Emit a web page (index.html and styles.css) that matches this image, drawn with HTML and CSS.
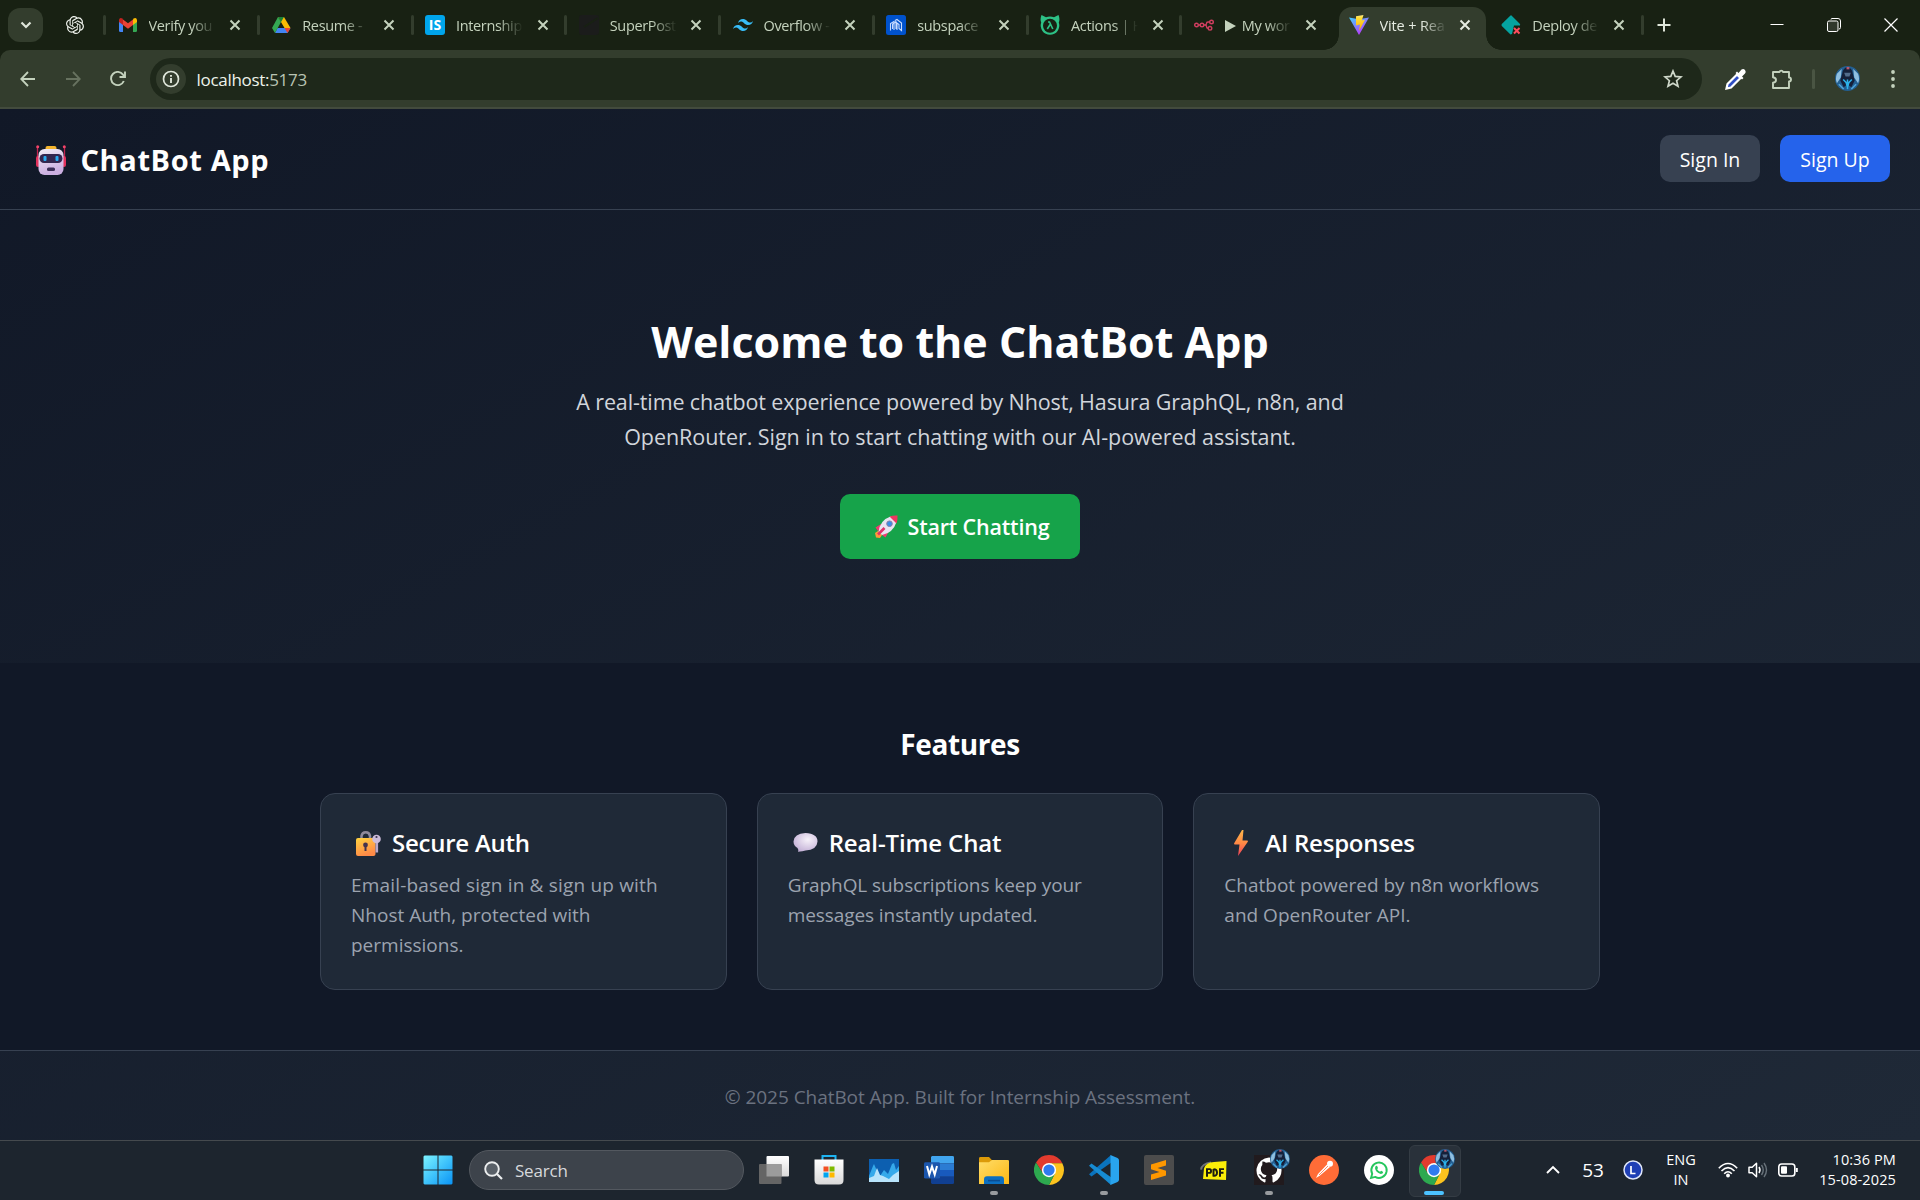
FILE: index.html
```html
<!DOCTYPE html>
<html lang="en">
<head>
<meta charset="utf-8">
<title>Vite + React</title>
<link rel="stylesheet" href="styles.css">
</head>
<body>
<svg class="defs" width="0" height="0" aria-hidden="true">
  <defs>
    <linearGradient id="win" x1="0" y1="0" x2="1" y2="1"><stop offset="0" stop-color="#7df3ff"/><stop offset=".5" stop-color="#40c4fb"/><stop offset="1" stop-color="#0a93f5"/></linearGradient>
    <linearGradient id="vite" x1="0" y1="0" x2=".6" y2="1"><stop offset="0" stop-color="#41d1ff"/><stop offset="1" stop-color="#bd34fe"/></linearGradient>
    <linearGradient id="flash" x1="0" y1="0" x2="0" y2="1"><stop offset="0" stop-color="#ffea83"/><stop offset=".2" stop-color="#ffdd35"/><stop offset="1" stop-color="#ffa800"/></linearGradient>
    <linearGradient id="bolt" x1="0" y1="0" x2="0" y2="1"><stop offset="0" stop-color="#fdb64a"/><stop offset=".5" stop-color="#ff8a45"/><stop offset="1" stop-color="#f0405a"/></linearGradient>
    <linearGradient id="lock" x1="0" y1="0" x2=".4" y2="1"><stop offset="0" stop-color="#ffd33f"/><stop offset="1" stop-color="#ff8a48"/></linearGradient>
    <linearGradient id="face" x1="0" y1="0" x2=".3" y2="1"><stop offset="0" stop-color="#f2ecf6"/><stop offset="1" stop-color="#cbaee0"/></linearGradient>
    <radialGradient id="bubble" cx=".6" cy=".35" r=".7"><stop offset="0" stop-color="#f7f2fa"/><stop offset="1" stop-color="#c3b0d6"/></radialGradient>
    <linearGradient id="folder" x1="0" y1="0" x2="1" y2="1"><stop offset="0" stop-color="#ffdd69"/><stop offset="1" stop-color="#fcb813"/></linearGradient>
    <linearGradient id="paper" x1="0" y1="0" x2="0" y2="1"><stop offset="0" stop-color="#ffffff"/><stop offset="1" stop-color="#d9d9d9"/></linearGradient>
    <symbol id="chrome" viewBox="0 0 48 48">
      <path fill="#e33b2e" d="M24 13H45.3A24 24 0 0 0 3.2 12L14.5 29.5Z"/>
      <path fill="#fcc31e" d="M33.5 29.5 24 48A24 24 0 0 0 45.3 13H24Z"/>
      <path fill="#2da94f" d="M14.5 29.5 3.2 12A24 24 0 0 0 24 48L33.5 29.5Z"/>
      <circle cx="24" cy="24" r="11.4" fill="#fff"/><circle cx="24" cy="24" r="9" fill="#2f7bf0"/>
    </symbol>
    <symbol id="avatar" viewBox="0 0 26 26">
      <circle cx="13" cy="13" r="13" fill="#235f92"/>
      <path fill="#8fbfe0" d="M2 8 7 3 6 12 2 18Q0 13 2 8ZM24 8 19 3 20 12 24 18Q26 13 24 8Z"/>
      <path fill="#15203a" d="M13 1Q8 2 7.500 8L5.500 15 9 22 13 19 17 22 20.500 15 18.500 8Q18 2 13 1Z"/>
      <path fill="#b9586c" d="M12 1H15V3.500H12Z"/><path fill="#526c8c" d="M9.500 7H16.500L15 11H11Z"/>
      <path fill="none" stroke="#2bb2ea" stroke-width="1.600" d="M8.500 14 11.500 17 13 22 14.500 17 17.500 14M13 14V24"/>
      <path fill="none" stroke="#4fa6da" stroke-width="1.600" d="M4 19 9 24M22 19 17 24"/>
    </symbol>
    <symbol id="x" viewBox="0 0 12 12"><path d="M1.500 1.500 10.500 10.500M10.500 1.500 1.500 10.500" fill="none" stroke="currentColor" stroke-width="2"/></symbol>
  </defs>
</svg>

<div class="tabstrip">
  <div class="tab-search"><svg width="12" height="8" viewBox="0 0 12 8"><path d="M1.500 1.500 6 6 10.500 1.500" fill="none" stroke="#dfe6da" stroke-width="2.200"/></svg></div>
  <div class="tab-pinned"><svg width="18" height="18" viewBox="0 0 24 24"><path fill="#eef2ec" d="M22.2819 9.8211a5.9847 5.9847 0 0 0-.5157-4.9108 6.0462 6.0462 0 0 0-6.5098-2.9A6.0651 6.0651 0 0 0 4.9807 4.1818a5.9847 5.9847 0 0 0-3.9977 2.9 6.0462 6.0462 0 0 0 .7427 7.0966 5.98 5.98 0 0 0 .511 4.9107 6.051 6.051 0 0 0 6.5146 2.9001A5.9847 5.9847 0 0 0 13.2599 24a6.0557 6.0557 0 0 0 5.7718-4.2058 5.9894 5.9894 0 0 0 3.9977-2.9001 6.0557 6.0557 0 0 0-.7475-7.0729zm-9.022 12.6081a4.4755 4.4755 0 0 1-2.8764-1.0408l.1419-.0804 4.7783-2.7582a.7948.7948 0 0 0 .3927-.6813v-6.7369l2.02 1.1686a.071.071 0 0 1 .038.052v5.5826a4.504 4.504 0 0 1-4.4945 4.4944zm-9.6607-4.1254a4.4708 4.4708 0 0 1-.5346-3.0137l.142.0852 4.783 2.7582a.7712.7712 0 0 0 .7806 0l5.8428-3.3685v2.3324a.0804.0804 0 0 1-.0332.0615L9.74 19.9502a4.4992 4.4992 0 0 1-6.1408-1.6464zM2.3408 7.8956a4.485 4.485 0 0 1 2.3655-1.9728V11.6a.7664.7664 0 0 0 .3879.6765l5.8144 3.3543-2.0201 1.1685a.0757.0757 0 0 1-.071 0l-4.8303-2.7865A4.504 4.504 0 0 1 2.3408 7.872zm16.5963 3.8558L13.1038 8.364 15.1192 7.2a.0757.0757 0 0 1 .071 0l4.8303 2.7913a4.4944 4.4944 0 0 1-.6765 8.1042v-5.6772a.79.79 0 0 0-.407-.667zm2.0107-3.0231l-.142-.0852-4.7735-2.7818a.7759.7759 0 0 0-.7854 0L9.409 9.2297V6.8974a.0662.0662 0 0 1 .0284-.0615l4.8303-2.7866a4.4992 4.4992 0 0 1 6.6802 4.66zM8.3065 12.863l-2.02-1.1638a.0804.0804 0 0 1-.038-.0567V6.0742a4.4992 4.4992 0 0 1 7.3757-3.4537l-.142.0805L8.704 5.459a.7948.7948 0 0 0-.3927.6813zm1.0976-2.3654l2.602-1.4998 2.6069 1.4998v2.9994l-2.5974 1.4997-2.6067-1.4997Z"/></svg></div>

  <div class="tab"><svg class="fav" viewBox="0 0 20 20"><path fill="#4285f4" d="M1 6V15.500Q1 17 2.300 17H5V9Z"/><path fill="#34a853" d="M15 9V17H17.700Q19 17 19 15.500V6Z"/><path fill="#fbbc04" d="M15 4.500V10L19 7V5Q18.500 2 15.500 3.500Z"/><path fill="#ea4335" d="M5 4.500 10 8.300 15 4.500V10L10 13.800 5 10Z"/><path fill="#c5221f" d="M1 5Q1.500 2 4.500 3.500L5 4.200V10L1 7Z"/></svg><span class="t">Verify you</span><svg class="x"><use href="#x"/></svg></div>
  <div class="tab"><svg class="fav" viewBox="0 0 20 20"><path fill="#fbbc04" d="M7 2H13L19.500 13H13.500Z"/><path fill="#4285f4" d="M6.500 13H19.500L16.500 18H4Z"/><path fill="#ea4335" d="M13.500 13H19.500L16.500 18Z"/><path fill="#34a853" d="M7 2 10 7 4 18 1 13Z"/><path fill="#188038" d="M7 2H13L10 7Z"/></svg><span class="t">Resume -</span><svg class="x"><use href="#x"/></svg></div>
  <div class="tab"><span class="fav fav-is">IS</span><span class="t">Internship</span><svg class="x"><use href="#x"/></svg></div>
  <div class="tab"><svg class="fav" viewBox="0 0 20 20"><rect width="20" height="20" rx="3" fill="#1b1c1b"/><path d="M5 12 19 3" stroke="#182113" stroke-width="2"/></svg><span class="t">SuperPost</span><svg class="x"><use href="#x"/></svg></div>
  <div class="tab"><svg class="fav" viewBox="0 0 24 24"><path fill="#38bdf8" d="M12 4.800Q7.200 4.800 6 9.600 7.800 7.200 10.200 7.800C11.600 8.100 12.500 9.100 13.600 10.200 15.300 12 17.300 12 18 12Q22.800 12 24 7.200 22.200 9.600 19.800 9C18.400 8.700 17.500 7.700 16.400 6.600 14.700 4.800 12.700 4.800 12 4.800ZM6 12Q1.200 12 0 16.800 1.800 14.400 4.200 15C5.600 15.300 6.500 16.300 7.600 17.400 9.300 19.200 11.300 19.200 12 19.200Q16.800 19.200 18 14.400 16.200 16.800 13.800 16.200C12.400 15.900 11.500 14.900 10.400 13.800 8.700 12 6.700 12 6 12Z"/></svg><span class="t">Overflow -</span><svg class="x"><use href="#x"/></svg></div>
  <div class="tab"><svg class="fav" viewBox="0 0 20 20"><rect width="20" height="20" rx="2.500" fill="#0052cd"/><path d="M4.500 15.500V8.500L8 6.500V15M6.500 14V9L10 7V14M9 5.500 11 4.500 15.500 8V15.500L13 13.500V9.500L9 6.500M11 8V15" fill="none" stroke="#c8dcff" stroke-width="1.100"/></svg><span class="t">subspace</span><svg class="x"><use href="#x"/></svg></div>
  <div class="tab"><svg class="fav" viewBox="0 0 20 20"><path fill="#2dc186" d="M1.500 0 6 2.200Q10 .8 14 2.200L18.500 0Q20.200 4 18.800 7.500A9.300 9.300 0 1 1 1.200 7.500Q-.2 4 1.500 0Z"/><circle cx="10" cy="10.700" r="7" fill="#182113"/><path fill="none" stroke="#2dc186" stroke-width="1.600" d="M8 7H9.500L12.800 14M10.200 9.500 7.300 14"/></svg><span class="t">Actions | H</span><svg class="x"><use href="#x"/></svg></div>
  <div class="tab"><svg class="fav" viewBox="0 0 20 20"><g fill="none" stroke="#d13e60" stroke-width="1.400"><circle cx="2.500" cy="10" r="1.800"/><circle cx="8" cy="10" r="1.800"/><circle cx="17.500" cy="7" r="1.800"/><circle cx="16" cy="13.300" r="1.800"/><path d="M4.300 10H6.200M9.800 10H11Q12.500 10 12.500 8.500 12.500 7 14 7H15.700M11 10Q12.500 10 12.500 11.500 12.500 13.300 14.200 13.300"/></g></svg><span class="t"><svg class="play" width="11" height="12" viewBox="0 0 11 12"><path fill="currentColor" d="M0 0 11 6 0 12Z"/></svg>My wor</span><svg class="x"><use href="#x"/></svg></div>
  <div class="tab active"><svg class="fav" viewBox="0 0 20 20"><path fill="url(#vite)" d="M0 2.500 10 4.200 20 2.500 10 20Z"/><path fill="url(#flash)" d="M7 1.200 14.500 0 12.800 5.500 16 4.800 10 16 11 9.500 7 10.500Z"/></svg><span class="t">Vite + Rea</span><svg class="x"><use href="#x"/></svg></div>
  <div class="tab"><svg class="fav" viewBox="0 0 20 20"><path fill="#05a3a0" d="M9.500 .5Q10 .2 10.500.5L19 9Q19.300 9.700 19 10.500H13L11 19 9.500 19.500.8 11Q.2 10 .8 9Z"/><path d="M13 13 18.500 18.500M18.500 13 13 18.500" stroke="#ff4c5e" stroke-width="2"/></svg><span class="t">Deploy de</span><svg class="x"><use href="#x"/></svg></div>
  <div class="newtab"><svg width="14" height="14" viewBox="0 0 14 14"><path d="M7 .5V13.500M.5 7H13.500" stroke="#dfe6da" stroke-width="2"/></svg></div>
  <div class="winctl">
    <svg width="14" height="14" viewBox="0 0 14 14"><path d="M.5 6.500H13.500" stroke="#fff"/></svg>
    <svg width="14" height="14" viewBox="0 0 14 14"><path d="M4 1.500Q4 .5 5 .5H11Q13.500.5 13.500 3V9.500Q13.500 11 12 11" fill="none" stroke="#fff"/><rect x=".5" y="3" width="10.500" height="10.500" rx="1.500" fill="#30382c" stroke="#fff"/></svg>
    <svg width="14" height="14" viewBox="0 0 14 14"><path d="M.5.5 13.500 13.500M13.500.5.5 13.500" stroke="#fff" stroke-width="1.200"/></svg>
  </div>
</div>

<div class="toolbar">
  <div class="nav">
    <svg width="16" height="16" viewBox="0 0 16 16"><path d="M15 8H1.500M8 1 1.200 8 8 15" fill="none" stroke="#c4d2bd" stroke-width="1.800"/></svg>
    <svg width="16" height="16" viewBox="0 0 16 16"><path d="M1 8H14.500M8 1 14.800 8 8 15" fill="none" stroke="#67725f" stroke-width="1.800"/></svg>
    <svg width="16" height="16" viewBox="0 0 16 16"><path d="M13.800 10A6.600 6.600 0 1 1 13 3.600L14.500 5.500M15 .5V6H9.500" fill="none" stroke="#c4d2bd" stroke-width="1.900"/></svg>
  </div>
  <div class="omnibox">
    <div class="info"><svg width="18" height="18" viewBox="0 0 18 18"><circle cx="9" cy="9" r="7.500" fill="none" stroke="#dfe6da" stroke-width="1.700"/><path d="M9 8V13M9 5V6.700" stroke="#dfe6da" stroke-width="1.900"/></svg></div>
    <span class="url">localhost:<span class="port">5173</span></span>
    <svg class="star" width="20" height="20" viewBox="0 0 20 20"><path d="M10 2 12.200 7.400 18 7.900 13.600 11.700 15 17.300 10 14.300 5 17.300 6.400 11.700 2 7.900 7.800 7.400Z" fill="none" stroke="#cfd8ca" stroke-width="1.700"/></svg>
  </div>
  <svg class="pick" width="22" height="22" viewBox="0 0 22 22"><path d="M1.500 20.500 2.500 16 12 6.500 15.500 10 6 19.500Z" fill="#2f4ec4" stroke="#fff" stroke-width="2.200"/><path d="M10.500 5 12 3.500 13.500 5 16.500 1.500Q18.500.5 20 2 21.500 4 20 5.500L17 8.500 18.500 10 17 11.500Z" fill="#fff"/></svg>
  <svg class="ext" width="22" height="22" viewBox="0 0 22 22"><path d="M2 4H8.500A1.800 1.800 0 0 1 12 4H18V9.500A1.800 1.800 0 0 1 18 13.500V20H2V14.800Q5 14.300 5 12 5 9.700 2 9.200Z" fill="none" stroke="#c4d2bd" stroke-width="1.900" stroke-linejoin="round"/></svg>
  <span class="bar"></span>
  <svg class="me" width="25" height="25"><use href="#avatar"/></svg>
  <svg class="dots" width="4" height="18" viewBox="0 0 4 18"><g fill="#c4d2bd"><circle cx="2" cy="2" r="1.900"/><circle cx="2" cy="9" r="1.900"/><circle cx="2" cy="16" r="1.900"/></g></svg>
</div>

<div class="app">
  <header class="site-header">
    <div class="brand"><svg width="30" height="30" viewBox="0 0 30 30"><path d="M1.500 2V12M28.500 2V12" stroke="#c22350" stroke-width="1.300"/><circle cx="1.700" cy="1.800" r="1.500" fill="#f3456a"/><circle cx="28.300" cy="1.800" r="1.500" fill="#f3456a"/><rect x="0" y="11" width="4" height="11" rx="2" fill="#e3315c"/><rect x="26" y="11" width="4" height="11" rx="2" fill="#e3315c"/><rect x="9.500" y="1" width="11" height="5" rx="2" fill="#f5b52e"/><rect x="2.500" y="4" width="25" height="26" rx="6" fill="url(#face)"/><rect x="3.500" y="9" width="23" height="9" rx="4.500" fill="#33264f"/><rect x="7.500" y="11" width="3" height="5" rx="1" fill="#29a9ee"/><rect x="19.500" y="11" width="3" height="5" rx="1" fill="#29a9ee"/><rect x="11" y="22.500" width="8" height="3.500" rx="1.500" fill="#3c2e58"/></svg><span class="brand-name">ChatBot App</span></div>
    <nav class="auth"><button class="btn gray">Sign In</button><button class="btn blue">Sign Up</button></nav>
  </header>
  <main class="hero">
    <h1>Welcome to the ChatBot App</h1>
    <p>A real-time chatbot experience powered by Nhost, Hasura GraphQL, n8n, and<br><span class="lead-end">OpenRouter. Sign in to start chatting with our AI-powered assistant.</span></p>
    <button class="cta"><svg width="24" height="24" viewBox="0 0 24 24"><path fill="#ff9838" d="M2 22.500 1 18 4 16 8 20 6 23Z"/><path fill="#f03b72" d="M7 9 1.500 12.500 4 16 8 14ZM15 16 11.500 22.500 8 20 10 16Z"/><path fill="#e9e3f1" d="M4.500 17Q6 5 16.500 1.500L22.500 7Q19 18 8 20Z"/><path fill="#ef3561" d="M15.500 1.500Q19 .2 23.500.5 23.800 5 22.500 8.500Z"/><circle cx="15.500" cy="8.700" r="2.800" fill="#3a8de6" stroke="#8a7fa8"/><path d="M4 19.500 10.500 13" stroke="#e0306a" stroke-width="2.600"/></svg><span>Start Chatting</span></button>
  </main>
  <section class="features">
    <h2>Features</h2>
    <div class="cards">
      <article class="card"><h3><svg width="25" height="26" viewBox="0 0 25 26"><path d="M5.500 10V6A4.300 4.300 0 0 1 14 6V10" fill="none" stroke="#8d899b" stroke-width="2.500"/><rect x="0" y="8" width="19.500" height="18" rx="2" fill="url(#lock)"/><path d="M20.800 8V22.500" stroke="#b9a9ca" stroke-width="2.600"/><circle cx="20.500" cy="9" r="4.300" fill="#cbbbd8"/><circle cx="20.500" cy="7" r="1.100" fill="#3b3550"/><circle cx="9.500" cy="15" r="2.400" fill="#45324d"/><path d="M9.500 15V21" stroke="#45324d" stroke-width="2"/></svg><span>Secure Auth</span></h3><p><span class="wide">Email-based sign in &amp; sign up with</span><br>Nhost Auth, protected with<br>permissions.</p></article>
      <article class="card"><h3><svg width="25" height="26" viewBox="0 0 25 26"><path fill="url(#bubble)" d="M12.500 3Q24.500 3.500 24.500 11.500 24 20 12.500 20.500 10 21.500 5 21.700 6 20 4.500 18 .5 15.500.5 11.500 1 3.500 12.500 3Z"/></svg><span class="chat-title">Real-Time Chat</span></h3><p class="tight">GraphQL subscriptions keep your<br>messages instantly updated.</p></article>
      <article class="card"><h3><svg width="25" height="26" viewBox="0 0 25 26"><path fill="url(#bolt)" d="M13 0 5 13.500 5.500 14.500H10.500L9 26 19 11.500 18.500 10.500H13.500L14.500 0Z"/></svg><span>AI Responses</span></h3><p>Chatbot powered by n8n workflows<br>and OpenRouter API.</p></article>
    </div>
  </section>
  <footer>© 2025 ChatBot App. Built for Internship Assessment.</footer>
</div>

<div class="taskbar">
  <div class="cell start"><svg width="30" height="30" viewBox="0 0 30 30"><path fill="url(#win)" d="M1.500.5H14.500V14.500H.5V1.500ZM15.500.5H28.500L29.500 1.500V14.500H15.500ZM.5 15.500H14.500V29.500H1.500L.5 28.500ZM15.500 15.500H29.500V28.500L28.500 29.500H15.500Z"/></svg></div>
  <div class="search"><svg width="19" height="19" viewBox="0 0 19 19"><circle cx="8" cy="8" r="6.800" fill="#596068" stroke="#eceeef" stroke-width="1.900"/><path d="M13 13 18 18" stroke="#eceeef" stroke-width="2.200"/></svg><span>Search</span></div>
  <div class="cell"><svg width="30" height="28" viewBox="0 0 30 28"><rect x="7.500" y="0" width="22.500" height="20.500" rx="1" fill="url(#paper)"/><rect x="0" y="8" width="22.500" height="20" rx="1" fill="#656565"/><rect x="7.500" y="8" width="15" height="12.500" fill="#9b9b9b"/></svg></div>
  <div class="cell"><svg width="30" height="30" viewBox="0 0 30 30"><path d="M8.500 6V1H21.500V6" fill="none" stroke="#1eb4f2" stroke-width="2"/><path d="M.5 4.500H29.500V25Q29.500 29.500 25 29.500H5Q.5 29.500.5 25Z" fill="url(#paper)"/><path fill="#f25022" d="M9.500 11.500H14.500V16.500H9.500Z"/><path fill="#7fba00" d="M15.500 11.500H20.500V16.500H15.500Z"/><path fill="#00a4ef" d="M9.500 17.500H14.500V22.500H9.500Z"/><path fill="#ffb900" d="M15.500 17.500H20.500V22.500H15.500Z"/></svg></div>
  <div class="cell"><svg width="30" height="23" viewBox="0 0 30 23"><rect width="30" height="23" fill="#0c5fb0"/><path fill="#35a9ea" d="M0 17 4 7 5 5 8 12 11 17 15 11 19 15 23 5 25 4 27 11 30 7V23H0Z"/><path fill="#b8e4fb" d="M0 19 5 17 8 9 11 16 14 17 20 20 24 16 30 12V23H0Z"/></svg></div>
  <div class="cell"><svg width="30" height="28" viewBox="0 0 30 31" preserveAspectRatio="none"><path fill="#41a5ee" d="M8 0H28.500Q30 0 30 1.500V8H7V1Z"/><path fill="#2b7cd3" d="M7 8H30V15.500H7Z"/><path fill="#185abd" d="M7 15.500H30V23H7Z"/><path fill="#103f91" d="M7 23H30V29.500Q30 31 28.500 31H8L7 30Z"/><rect y="7" width="16" height="18" rx="1.500" fill="#1b56ad"/><path d="M3 11 5.300 20.500 8 11.500 10.700 20.500 13 11" fill="none" stroke="#fff" stroke-width="2"/></svg></div>
  <div class="cell run"><svg width="30" height="27" viewBox="0 0 30 28" preserveAspectRatio="none"><path fill="#dc9a08" d="M0 1.500Q0 0 1.500 0H10L13.500 4H30V10H0Z"/><path fill="url(#folder)" d="M0 5.500H10L13 3H28.500Q30 3 30 4.500V28H0Z"/><path fill="#0c6fc0" d="M5 28V23Q5 20 8 20H22Q25 20 25 23V28Z"/><path stroke="#0a4d92" stroke-width="1.600" d="M9 24.500H21"/></svg></div>
  <div class="cell"><svg width="30" height="30"><use href="#chrome"/></svg></div>
  <div class="cell run"><svg width="30" height="30" viewBox="0 0 30 31" preserveAspectRatio="none"><path fill="#0a73bd" d="M0 20 2.500 22.300 22 8V0Z"/><path fill="#168bd2" d="M0 11 2.500 8.800 22 23V31Z"/><path fill="#29a4ee" d="M21.500 0 28.500 3Q30 4 30 5.500V25.500Q30 27 28.500 28L21.500 31Z"/></svg></div>
  <div class="cell"><svg width="30" height="30" viewBox="0 0 30 30"><rect width="30" height="30" rx="2" fill="#4c4c4c"/><path fill="#ff9800" d="M7 9.500 22 5V10.500L13.500 13 22 15.700V20.500L7 25V19.500L15.500 17 7 14.300Z"/></svg></div>
  <div class="cell"><svg width="27" height="19" viewBox="0 0 27 20" preserveAspectRatio="none"><path d="M1 9Q2 3 11 1.500" fill="none" stroke="#6f7377" stroke-width="2"/><path fill="#fbee08" d="M3 19 4 8Q6 1 14 1L26.500 0 26 20Z"/><path d="M7 16.500V8.500H9.800Q11 8.500 11 10.500 11 12.500 9.500 12.500H7.500M13.500 8.500V15.500Q17 16 17 12 17 8.500 13.500 8.500M20 16.500V8.500H24M20 12.300H23.500" fill="none" stroke="#1c1c10" stroke-width="2"/></svg></div>
  <div class="cell run"><svg width="30" height="30" viewBox="0 0 30 30"><rect width="30" height="30" fill="#211a1d"/><path fill="#fff" d="M15 2.500A13 13 0 0 0 10.500 27.500Q11.500 27.500 11.500 26.500V24Q7.500 24.800 6.500 21.500L4.500 19.500Q6.500 18.500 8.500 21.500 10 23 11.700 22L12.500 20.200Q6.800 19.500 6.800 14 6.800 11.500 8.300 9.900L8.400 6.500Q10 6.200 12 7.700 15 7 18 7.700 20 6.200 21.600 6.500L21.700 9.900Q23.200 11.500 23.200 14 23.200 19.500 17.500 20.200 18.500 21 18.500 23V26.500Q18.500 27.500 19.500 27.500A13 13 0 0 0 15 2.500Z"/></svg><svg class="badge" width="20" height="20"><use href="#avatar"/></svg></div>
  <div class="cell"><svg width="30" height="30" viewBox="0 0 30 30"><circle cx="15" cy="15" r="15" fill="#ff6c37"/><path d="M7 23 9 19 18 9.500 21 12 11 20.500Z" fill="#fff"/><circle cx="21" cy="8.800" r="3" fill="#fff"/><path d="M10 20 19 11" stroke="#ff6c37" stroke-width=".8"/></svg></div>
  <div class="cell"><svg width="30" height="30" viewBox="0 0 30 30"><circle cx="15" cy="15" r="15" fill="#fff"/><path d="M7 23 8.200 18.800A7.700 7.700 0 1 1 11.200 21.900Z" fill="none" stroke="#25c65d" stroke-width="1.900"/><path d="M11.700 11 13 10.800 14 13 13.200 14.200Q14.200 16 16 16.800L17.200 15.800 19.200 16.900Q19 19 16.800 19 11.500 17.500 11 13Z" fill="#25c65d"/></svg></div>
  <div class="cell run current"><svg width="30" height="30"><use href="#chrome"/></svg><svg class="badge" width="20" height="20"><use href="#avatar"/></svg></div>

  <div class="tray">
    <svg class="chev" width="14" height="9" viewBox="0 0 14 9"><path d="M1 8 7 2 13 8" fill="none" stroke="#fff" stroke-width="1.900"/></svg>
    <span class="temp">53</span>
    <svg class="lang" width="20" height="20" viewBox="0 0 20 20"><circle cx="10" cy="10" r="9" fill="#1f3fb5" stroke="#dfe6fa" stroke-width="1.500"/><path d="M8 6V13.500H12.500" fill="none" stroke="#fff" stroke-width="1.700"/></svg>
    <div class="ime"><span>ENG</span><span>IN</span></div>
    <svg class="wifi" width="20" height="16" viewBox="0 0 20 16"><g fill="none" stroke="#fff" stroke-width="1.600"><path d="M.8 6.200Q10-3.200 19.200 6.200M3.500 9Q10 2.300 16.500 9M6.200 11.700Q10 7.800 13.800 11.700"/></g><circle cx="10" cy="13.500" r="1.900" fill="#fff"/></svg>
    <svg class="vol" width="20" height="16" viewBox="0 0 20 16"><path d="M1 5.300H4.200L8.500 1.300V14.700L4.200 10.700H1Z" fill="none" stroke="#fff" stroke-width="1.500" stroke-linejoin="round"/><path d="M11 5Q13 8 11 11" fill="none" stroke="#fff" stroke-width="1.500"/><path d="M13.500 3Q17 8 13.500 13M16 1Q21 8 16 15" fill="none" stroke="#68727a" stroke-width="1.400"/></svg>
    <svg class="batt" width="20" height="14" viewBox="0 0 20 14"><rect x=".8" y="1" width="16" height="12" rx="2.800" fill="none" stroke="#fff" stroke-width="1.600"/><rect x="3" y="3.300" width="6" height="7.500" rx="1" fill="#fff"/><path d="M18.800 5V9" stroke="#fff" stroke-width="2"/></svg>
    <div class="clock"><span>10:36 PM</span><span>15-08-2025</span></div>
  </div>
</div>
</body>
</html>
```
FILE: styles.css
```css
* { box-sizing: border-box; }
body {
  margin: 0;
  width: 1920px;
  height: 1200px;
  overflow: hidden;
  display: flex;
  flex-direction: column;
  background: #182113;
  color: #fff;
  font-family: "Open Sans", "Noto Sans", sans-serif;
}
svg { display: block; flex: none; }
.defs { position: absolute; }
button { border: 0; font: inherit; color: inherit; }

/* Tab strip */
.tabstrip { height: 50px; flex: none; display: flex; align-items: stretch; background: #182113; color: #c4d2bd; }
.tab-search { width: 35px; height: 34px; margin: 8px 3px 0 8px; border-radius: 12px; background: #333d2d; display: grid; place-items: center; flex: none; }
.tab-pinned { width: 57px; display: grid; place-items: center; flex: none; }
.tab { width: 153.75px; flex: none; display: flex; align-items: center; position: relative; padding-left: 14.500px; }
.tab::before { content: ""; position: absolute; left: 0; top: 15px; width: 3px; height: 20px; border-radius: 2px; background: #333d2d; }
.fav { width: 20px; height: 20px; flex: none; }
.fav-is { background: #00a5ec; border-radius: 3px; font: 700 14px/20px "Open Sans", sans-serif; color: #fff; text-align: center; }
.t {
  display: flex; align-items: center; width: 67px; margin: 1px 13.500px 0 11px; font-size: 14.500px; line-height: 20px; letter-spacing: -0.350px;
  white-space: nowrap; overflow: hidden; flex: none;
  -webkit-mask-image: linear-gradient(90deg, #000 62%, transparent);
  mask-image: linear-gradient(90deg, #000 62%, transparent);
}
.play { margin-right: 6px; }
.x { width: 12px; height: 12px; }
.active { color: #e6ece2; z-index: 1; }
.active::before { left: 5.500px; top: 7px; width: 147px; height: 43px; border-radius: 13px 13px 0 0; z-index: -1; }
.active::after {
  content: ""; position: absolute; left: -9.500px; bottom: 0; width: 177px; height: 15px; z-index: -2;
  background:
    radial-gradient(circle at 0 0, transparent 14.500px, #333d2d 15px) left / 15px 15px no-repeat,
    radial-gradient(circle at 100% 0, transparent 14.500px, #333d2d 15px) right / 15px 15px no-repeat;
}
.active .fav { margin-left: 1px; }
.active .t { margin-right: 12.500px; letter-spacing: -0.150px; }
.active + .tab::before { display: none; }
.newtab { position: relative; width: 46px; display: grid; place-items: center; }
.newtab::before { content: ""; position: absolute; left: 0; top: 15px; width: 3px; height: 20px; border-radius: 2px; background: #333d2d; }
.winctl { margin-left: auto; padding-right: 22px; display: flex; align-items: center; gap: 43px; }

/* Toolbar */
.toolbar { height: 59px; flex: none; display: flex; align-items: center; background: #333d2d; border-bottom: 2px solid #434b3d; border-radius: 10px 10px 0 0; }
.nav { width: 150px; padding-left: 20px; display: flex; gap: 29px; }
.omnibox { width: 1552px; height: 42px; border-radius: 21px; background: #1e281a; display: flex; align-items: center; padding: 0 19.500px 0 6px; }
.info { width: 30px; height: 30px; border-radius: 50%; background: #333d2d; display: grid; place-items: center; }
.url { margin: 1px 0 0 10.500px; font-size: 17px; letter-spacing: -0.300px; color: #eef3ea; }
.port { color: #b9c4b3; }
.star { margin-left: auto; }
.pick { margin-left: 23px; }
.ext { margin-left: 24px; }
.bar { width: 3px; height: 20px; margin-left: 19px; border-radius: 2px; background: #4a5543; }
.me { margin-left: 20px; }
.dots { margin-left: 30.500px; }

/* Page */
.app { height: 1031px; flex: none; display: flex; flex-direction: column; background: linear-gradient(to bottom right, #111827, #1f2937); }
.site-header { height: 101px; flex: none; display: flex; align-items: center; justify-content: space-between; padding: 0 30px 0 36px; border-bottom: 1px solid #374151; }
.brand { display: flex; align-items: center; gap: 14.500px; padding-top: 2px; font-size: 29px; font-weight: 700; line-height: 40px; letter-spacing: 0.620px; }
.auth { display: flex; gap: 20px; padding-bottom: 2px; }
.btn { height: 47px; border-radius: 10px; padding: 2px 0 0; font-size: 19.500px; }
.gray { width: 100px; background: #374151; }
.blue { width: 110px; background: #2563eb; }
.hero { height: 453px; flex: none; display: flex; flex-direction: column; align-items: center; padding-top: 107px; text-align: center; }
h1 { margin: 0 0 16.500px; font-size: 43px; line-height: 50px; font-weight: 700; }
.hero p { margin: 0 0 40.500px; font-size: 21.500px; line-height: 35px; letter-spacing: -0.120px; color: #d1d5db; white-space: nowrap; }
.lead-end { letter-spacing: -0.050px; }
.cta { width: 240px; height: 65px; border-radius: 10px; background: #16a34a; padding: 0 0 0 33.500px; display: flex; align-items: center; gap: 10px; font-size: 21.500px; font-weight: 600; letter-spacing: -0.180px; white-space: nowrap; }
.features { height: 387px; flex: none; background: #111827; padding: 61px 320px 0; }
h2 { margin: 0 0 29px; font-size: 28px; line-height: 40px; text-align: center; font-weight: 700; letter-spacing: -0.400px; }
.cards { display: grid; grid-template-columns: repeat(3, 1fr); gap: 30px; }
.card { height: 197px; border: 1px solid #374151; border-radius: 15px; background: #1f2937; padding: 31px 30px 0; }
h3 { margin: 0 0 10px; height: 35px; padding-left: 5px; display: flex; align-items: center; gap: 11px; font-size: 24px; font-weight: 600; letter-spacing: -0.240px; white-space: nowrap; }
.chat-title { letter-spacing: -0.130px; }
.card p { margin: 0; font-size: 19px; line-height: 30px; color: #9ca3af; white-space: nowrap; }
.wide { letter-spacing: 0.180px; }
.card .tight { letter-spacing: -0.080px; }
footer { flex: 1; border-top: 1px solid #374151; display: grid; place-items: center; padding-top: 3px; font-size: 19px; letter-spacing: -0.050px; color: #6b7280; }

/* Taskbar */
.taskbar { height: 60px; flex: none; display: flex; align-items: center; border-top: 1px solid #454a4e; background: #1d252e; padding-left: 410px; }
.cell { width: 55px; height: 59px; padding-bottom: 1px; display: grid; place-items: center; position: relative; flex: none; }
.search { width: 275px; height: 40px; margin: 0 2px 1px 4px; border-radius: 20px; border: 1px solid #53585f; background: #3d434b; display: flex; align-items: center; padding-left: 14px; gap: 12px; font-size: 17px; letter-spacing: -0.200px; color: #d7d9dc; }
.run::after { content: ""; position: absolute; left: 23.500px; bottom: 5px; width: 8px; height: 4px; border-radius: 2px; background: #989b9e; }
.current::before { content: ""; position: absolute; left: 2.500px; top: 4px; width: 50px; height: 50px; border-radius: 6px; background: #29313a; border: 1px solid #343c44; }
.current::after { left: 17.500px; width: 20px; background: #4cc2ff; }
.current svg { position: relative; }
.cell .badge { position: absolute; left: 28.500px; top: 8px; }
.tray { margin-left: auto; padding: 0 24px 2px 0; display: flex; align-items: center; }
.temp { width: 50px; text-align: center; font-size: 19px; margin-left: 8px; }
.lang { margin-left: 5px; }
.ime { width: 66px; margin-left: 5px; text-align: center; font-size: 14.500px; line-height: 20px; display: grid; justify-items: center; }
.wifi { margin-left: 4px; }
.vol { margin-left: 10px; }
.batt { margin-left: 10px; }
.clock { width: 98px; display: grid; justify-items: end; font-size: 14.500px; line-height: 20px; letter-spacing: 0.120px; }
```
